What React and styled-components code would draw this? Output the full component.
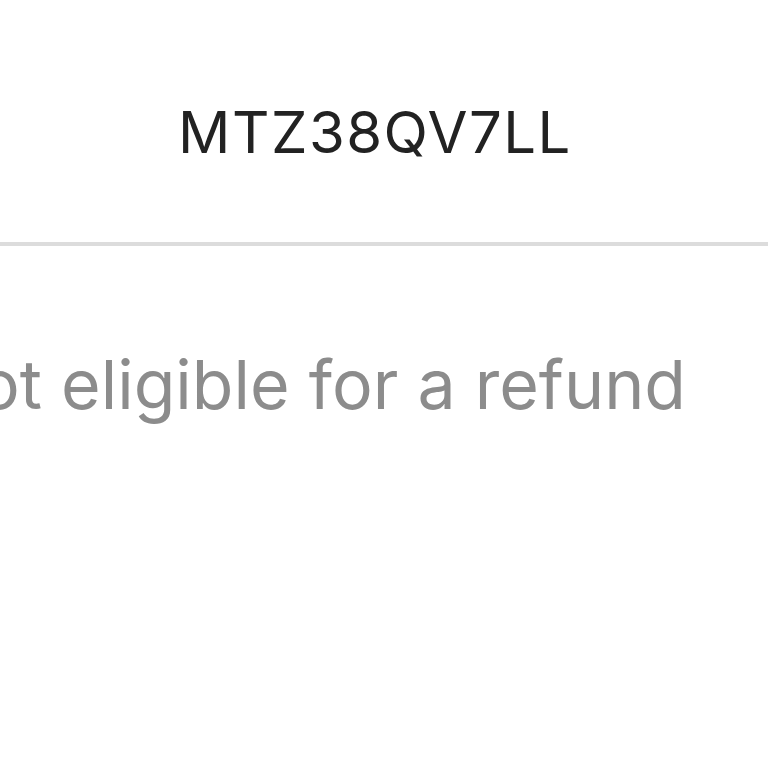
import React from "react";
import styled, { createGlobalStyle } from "styled-components";

const Global = createGlobalStyle`
  html, body { margin: 0; padding: 0; background: #fff; }
  body { width: 768px; height: 768px; overflow: hidden; font-family: Inter, "Noto Sans", sans-serif; }
`;

const Page = styled.div`
  width: 768px;
  height: 768px;
  display: flex;
  flex-direction: column;
  background: #fff;
  overflow: hidden;
`;

const Header = styled.div`
  height: 246px;
  display: flex;
  justify-content: center;
  align-items: flex-start;
  padding-right: 18px;
  box-sizing: border-box;
  border-bottom: 4px solid #dcdcdc;
`;

const Code = styled.div`
  margin-top: 96px;
  font-size: 58px;
  line-height: 72px;
  font-weight: 400;
  letter-spacing: 1.5px;
  color: #222;
`;

const NoteRow = styled.div`
  display: flex;
  justify-content: flex-end;
  padding-right: 82px;
  margin-top: 98px;
  white-space: nowrap;
`;

const Note = styled.div`
  font-size: 68px;
  line-height: 80px;
  color: #8c8c8c;
`;

export default function App() {
  return (
    <>
      <Global />
      <Page>
        <Header>
          <Code>MTZ38QV7LL</Code>
        </Header>
        <NoteRow>
          <Note>Not eligible for a refund</Note>
        </NoteRow>
      </Page>
    </>
  );
}
